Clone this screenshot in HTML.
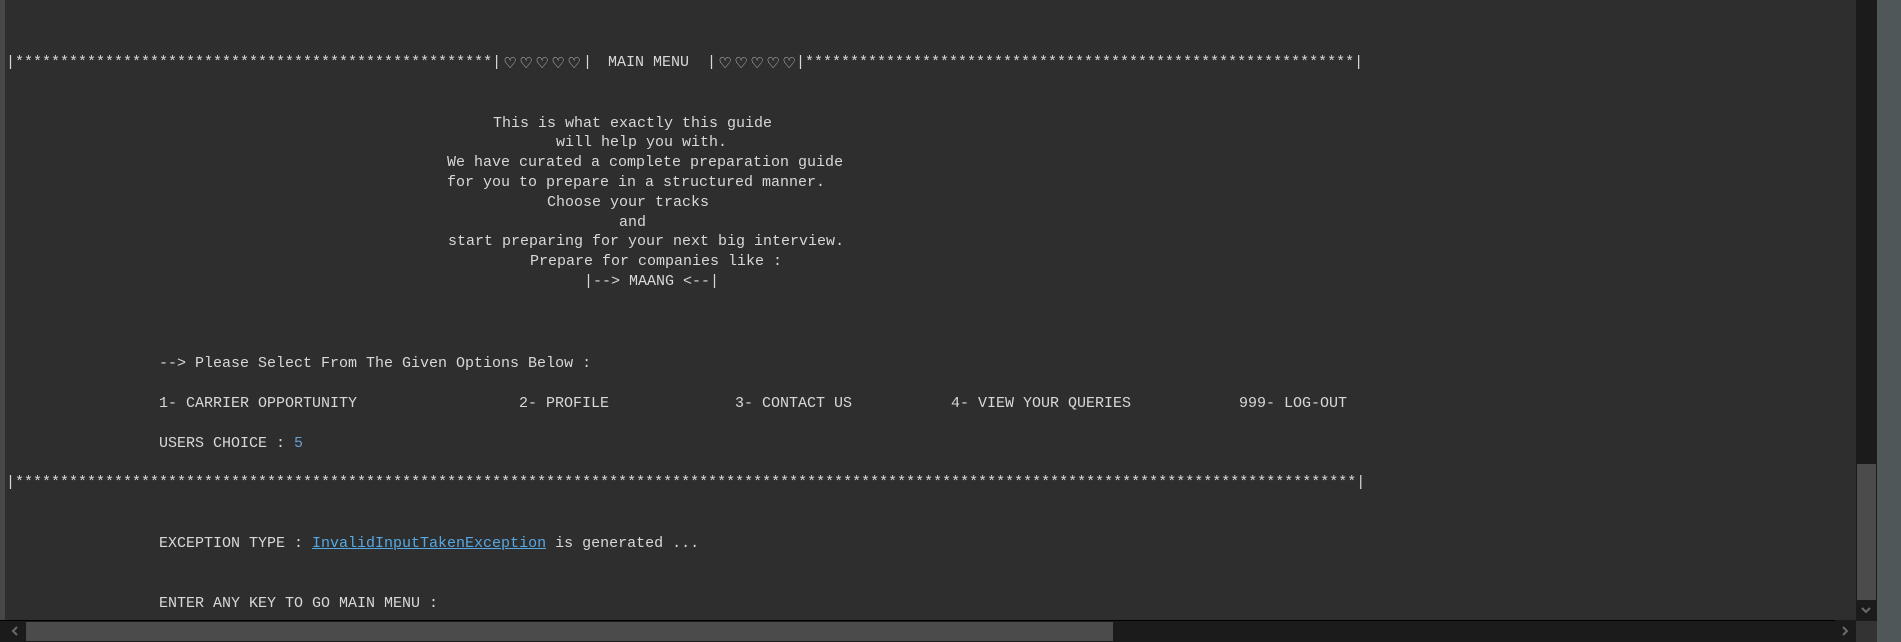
<!DOCTYPE html>
<html><head><style>
html,body{margin:0;padding:0;}
body{width:1901px;height:642px;background:#2e2e2e;position:relative;overflow:hidden;font-family:"Liberation Mono","DejaVu Sans Mono",monospace;font-size:15px;color:#d8d8d8;}
.t{position:absolute;white-space:pre;line-height:20px;height:20px;}
.h{display:inline-block;width:16px;text-align:center;font-family:"DejaVu Sans",sans-serif;font-size:15px;color:#dcdcdc;}
a{color:#56a8e3;text-decoration:underline;}
.n{color:#6a9fd0;}
</style></head><body>
<div style="position:absolute;left:0;top:0;width:5px;height:621px;background:#474747"></div>

<div class="t" style="left:6px;top:53px">|*****************************************************|</div>
<div class="t" style="left:502px;top:53px"><span class="h">♡</span><span class="h">♡</span><span class="h">♡</span><span class="h">♡</span><span class="h">♡</span></div>
<div class="t" style="left:583px;top:53px">|</div>
<div class="t" style="left:608px;top:53px">MAIN MENU</div>
<div class="t" style="left:707px;top:53px">|</div>
<div class="t" style="left:717px;top:53px"><span class="h">♡</span><span class="h">♡</span><span class="h">♡</span><span class="h">♡</span><span class="h">♡</span></div>
<div class="t" style="left:796px;top:53px">|*************************************************************|</div>

<div class="t" style="left:493px;top:114px">This is what exactly this guide</div>
<div class="t" style="left:556px;top:133px">will help you with.</div>
<div class="t" style="left:447px;top:153px">We have curated a complete preparation guide</div>
<div class="t" style="left:447px;top:173px">for you to prepare in a structured manner.</div>
<div class="t" style="left:547px;top:193px">Choose your tracks</div>
<div class="t" style="left:619px;top:213px">and</div>
<div class="t" style="left:448px;top:232px">start preparing for your next big interview.</div>
<div class="t" style="left:530px;top:252px">Prepare for companies like :</div>
<div class="t" style="left:584px;top:272px">|--&gt; MAANG &lt;--|</div>

<div class="t" style="left:159px;top:354px">--&gt; Please Select From The Given Options Below :</div>
<div class="t" style="left:159px;top:394px">1- CARRIER OPPORTUNITY</div>
<div class="t" style="left:519px;top:394px">2- PROFILE</div>
<div class="t" style="left:735px;top:394px">3- CONTACT US</div>
<div class="t" style="left:951px;top:394px">4- VIEW YOUR QUERIES</div>
<div class="t" style="left:1239px;top:394px">999- LOG-OUT</div>
<div class="t" style="left:159px;top:434px">USERS CHOICE : <span class="n">5</span></div>

<div class="t" style="left:6px;top:473px">|*****************************************************************************************************************************************************|</div>

<div class="t" style="left:159px;top:534px">EXCEPTION TYPE : <a>InvalidInputTakenException</a> is generated ...</div>
<div class="t" style="left:159px;top:594px">ENTER ANY KEY TO GO MAIN MENU :</div>

<div style="position:absolute;left:1856px;top:0;width:21px;height:621px;background:#1b1b1b"></div>
<div style="position:absolute;left:1857px;top:464px;width:19px;height:136px;background:#4b4b4b"></div>
<svg style="position:absolute;left:1859px;top:604px" width="14" height="12"><path d="M3 4 L7 8 L11 4" stroke="#6a6a6a" stroke-width="2" fill="none"/></svg>
<div style="position:absolute;left:1877px;top:0;width:24px;height:642px;background:#505759"></div>

<div style="position:absolute;left:0;top:620px;width:1856px;height:22px;background:#1b1b1b"></div>
<div style="position:absolute;left:0;top:620px;width:1835px;height:1px;background:#000"></div>
<div style="position:absolute;left:26px;top:622px;width:1087px;height:19px;background:#4b4b4b"></div>
<svg style="position:absolute;left:8px;top:624px" width="14" height="14"><path d="M9 3 L5 7 L9 11" stroke="#6a6a6a" stroke-width="2" fill="none"/></svg>
<svg style="position:absolute;left:1838px;top:624px" width="14" height="14"><path d="M5 3 L9 7 L5 11" stroke="#6a6a6a" stroke-width="2" fill="none"/></svg>
<div style="position:absolute;left:1856px;top:621px;width:21px;height:21px;background:#333"></div>
</body></html>
